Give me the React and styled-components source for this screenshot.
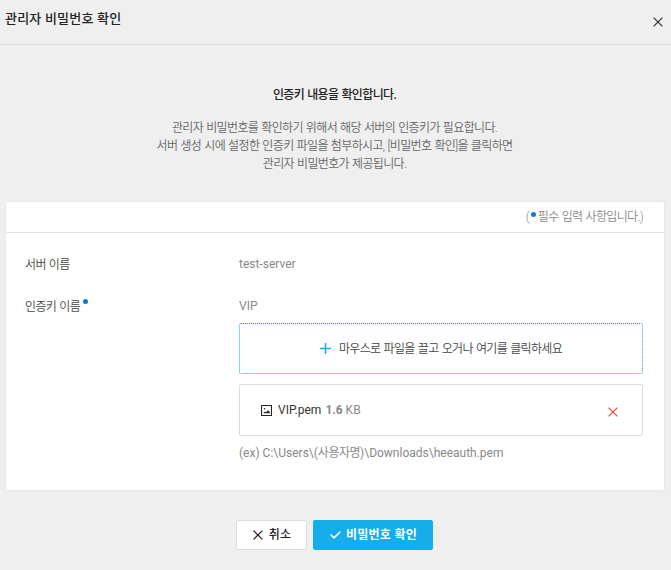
import React from "react";
import styled, { createGlobalStyle } from "styled-components";

const App = () => {
  return (
    <Dialog>
      <GlobalStyle />
      <Header>
        <Title>관리자 비밀번호 확인</Title>
        <IconButton aria-label="닫기">
          <CrossIcon />
        </IconButton>
      </Header>
      <Intro>
        <IntroTitle>인증키 내용을 확인합니다.</IntroTitle>
        <IntroText>
          관리자 비밀번호를 확인하기 위해서 해당 서버의 인증키가 필요합니다.
          <br />
          서버 생성 시에 설정한 인증키 파일을 첨부하시고, [비밀번호 확인]을 클릭하면
          <br />
          관리자 비밀번호가 제공됩니다.
        </IntroText>
      </Intro>
      <Card>
        <CardHeader>
          <span>(</span>
          <Dot />
          <span>필수 입력 사항입니다.)</span>
        </CardHeader>
        <Form>
          <Row>
            <Label>서버 이름</Label>
            <Field>
              <Value>test-server</Value>
            </Field>
          </Row>
          <Row>
            <Label>
              인증키 이름
              <Dot $raised />
            </Label>
            <Field>
              <Value>VIP</Value>
              <DropZone>
                <PlusIcon />
                <span>마우스로 파일을 끌고 오거나 여기를 클릭하세요</span>
              </DropZone>
              <FileItem>
                <ImageIcon />
                <FileName>VIP.pem</FileName>
                <FileSize>
                  <b>1.6</b> KB
                </FileSize>
                <RemoveButton aria-label="삭제">
                  <CrossIcon />
                </RemoveButton>
              </FileItem>
              <Hint>
                (ex) C:\Users\(<Korean>사용자명</Korean>)\Downloads\heeauth.pem
              </Hint>
            </Field>
          </Row>
        </Form>
      </Card>
      <Footer>
        <Button $width={71}>
          <CrossIcon />
          <span>취소</span>
        </Button>
        <Button $width={120} $primary>
          <CheckIcon />
          <span>비밀번호 확인</span>
        </Button>
      </Footer>
    </Dialog>
  );
};

export default App;

const CrossIcon = () => (
  <svg width="10" height="10" viewBox="0 0 10 10" fill="none">
    <path d="M0.6 0.6L9.4 9.4M9.4 0.6L0.6 9.4" stroke="currentColor" strokeWidth="1.25" />
  </svg>
);

const PlusIcon = () => (
  <svg width="11" height="11" viewBox="0 0 11 11" fill="none">
    <path d="M5.5 0V11M0 5.5H11" stroke="#18aeee" strokeWidth="1.5" />
  </svg>
);

const ImageIcon = () => (
  <svg width="11" height="11" viewBox="0 0 11 11" fill="none">
    <rect x="0.5" y="0.5" width="10" height="10" rx="0.5" stroke="#222" strokeWidth="1.1" />
    <circle cx="3.5" cy="3.8" r="0.8" fill="#222" />
    <path d="M2 8.3L3.9 6.4L5 7.3L7 5.2L9 7.5V8.3Z" fill="#222" />
  </svg>
);

const CheckIcon = () => (
  <svg width="11" height="8" viewBox="0 0 11 8" fill="none">
    <path d="M0.6 3.5L4 6.9L10.4 0.7" stroke="currentColor" strokeWidth="1.6" />
  </svg>
);

const GlobalStyle = createGlobalStyle`
  * {
    box-sizing: border-box;
  }
  body {
    margin: 0;
    background: #efefef;
    font-family: Roboto, "Noto Sans CJK KR", sans-serif;
    font-size: 12px;
    line-height: 18px;
    color: #888888;
  }
  svg {
    display: block;
    flex-shrink: 0;
  }
`;

const Dialog = styled.div`
  width: 671px;
  height: 570px;
  overflow: hidden;
`;

const Header = styled.header`
  display: flex;
  justify-content: space-between;
  height: 45px;
  padding: 9px 8px 0 5px;
  border-bottom: 1px solid #dfdfdf;
`;

const Title = styled.h1`
  margin: 0;
  font-weight: 500;
  font-size: 13px;
  line-height: 20px;
  letter-spacing: 0.2px;
  color: #222222;
`;

const IconButton = styled.button`
  display: flex;
  align-items: center;
  height: 26px;
  padding: 0;
  border: 0;
  background: none;
  color: #333333;
`;

const RemoveButton = styled(IconButton)`
  margin-top: 3px;
  color: #f4473c;
`;

const Korean = styled.span`
  letter-spacing: -0.5px;
`;

const Intro = styled.section`
  padding: 41px 2px 0 0;
  text-align: center;
  letter-spacing: -0.65px;
  word-spacing: 0.8px;
`;

const IntroTitle = styled.h2`
  margin: 0 0 15px;
  font-weight: 500;
  font-size: 12px;
  line-height: 18px;
  color: #222222;
`;

const IntroText = styled.p`
  margin: 0;
  font-weight: 350;
  color: #666666;
`;

const Card = styled.section`
  height: 290px;
  margin: 28px 6px 0 5px;
  border: 1px solid #e9e9e9;
  border-radius: 3px;
  background: #ffffff;
`;

const CardHeader = styled.div`
  display: flex;
  justify-content: flex-end;
  height: 31px;
  padding: 6px 21px 0 0;
  border-bottom: 1px solid #e2e2e2;
  font-weight: 350;
  letter-spacing: -0.65px;
  word-spacing: 0.8px;
`;

const Dot = styled.i`
  width: 5px;
  height: 5px;
  margin: ${({ $raised }) => ($raised ? "1px 0 0 3px" : "4px 2px 0 2px")};
  border-radius: 50%;
  background: #1678d6;
`;

const Form = styled.div`
  display: flex;
  flex-direction: column;
  gap: 24px;
  padding: 22px 21px 0 19px;
`;

const Row = styled.div`
  display: flex;
`;

const Label = styled.div`
  display: flex;
  width: 214px;
  height: 18px;
  padding-top: 1px;
  font-weight: 350;
  letter-spacing: -0.65px;
  word-spacing: 0.8px;
  color: #444444;
`;

const Field = styled.div`
  flex: 1;
`;

const Value = styled.div`
  color: #888888;
`;

const DropZone = styled.div`
  display: flex;
  align-items: center;
  justify-content: center;
  gap: 8px;
  height: 51px;
  margin-top: 8px;
  border: 1px dotted #18a5dc;
  border-radius: 2px;
  font-weight: 350;
  letter-spacing: -0.65px;
  word-spacing: 0.8px;
  color: #444444;
`;

const FileItem = styled.div`
  display: flex;
  align-items: center;
  height: 52px;
  margin-top: 10px;
  padding: 0 24px 0 21px;
  border: 1px solid #dddddd;
  border-radius: 2px;
`;

const FileName = styled.span`
  margin-left: 6px;
  color: #333333;
`;

const FileSize = styled.span`
  margin: 0 auto 0 4px;
`;

const Hint = styled.p`
  margin: 8px 0 0;
`;

const Footer = styled.footer`
  display: flex;
  justify-content: center;
  gap: 6px;
  padding: 29px 2px 0 0;
`;

const Button = styled.button`
  display: flex;
  align-items: center;
  justify-content: center;
  gap: ${({ $primary }) => ($primary ? 5 : 6)}px;
  width: ${({ $width }) => $width}px;
  height: 30px;
  padding: 0 0 0 1px;
  border: 1px solid ${({ $primary }) => ($primary ? "#15adeb" : "#dddddd")};
  border-radius: 2px;
  background: ${({ $primary }) => ($primary ? "#15adeb" : "#ffffff")};
  color: ${({ $primary }) => ($primary ? "#ffffff" : "#222222")};
  font-family: inherit;
  font-weight: ${({ $primary }) => ($primary ? 700 : 500)};
  font-size: 12px;
  line-height: 18px;
  letter-spacing: 0.25px;
`;
